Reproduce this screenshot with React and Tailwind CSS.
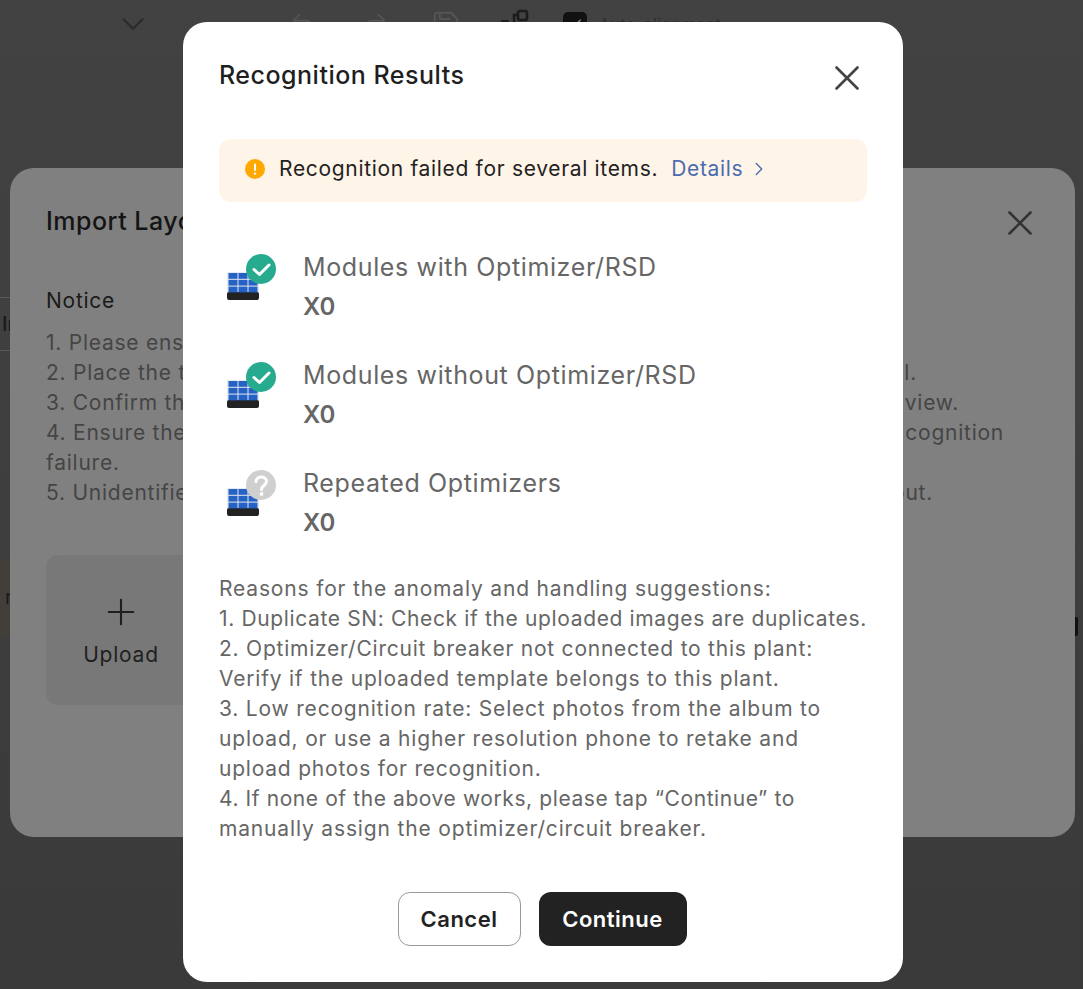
import { X, ChevronDown, ChevronRight, Plus, Undo2, Redo2, Save, Check } from "lucide-react";

const font = { fontFamily: "Inter, 'Open Sans', sans-serif" };

const results = [
  { label: "Modules with Optimizer/RSD", status: "ok" },
  { label: "Modules without Optimizer/RSD", status: "ok" },
  { label: "Repeated Optimizers", status: "unknown" },
];

const reasons = [
  { text: "Reasons for the anomaly and handling suggestions:", spacing: "tracking-[0.83px]" },
  { text: "1. Duplicate SN: Check if the uploaded images are duplicates.", spacing: "tracking-[0.64px]" },
  { text: "2. Optimizer/Circuit breaker not connected to this plant:", spacing: "tracking-[0.77px]" },
  { text: "Verify if the uploaded template belongs to this plant.", spacing: "tracking-[0.79px]" },
  { text: "3. Low recognition rate: Select photos from the album to", spacing: "tracking-[0.8px]" },
  { text: "upload, or use a higher resolution phone to retake and", spacing: "tracking-[0.8px]" },
  { text: "upload photos for recognition.", spacing: "tracking-[0.78px]" },
  { text: "4. If none of the above works, please tap “Continue” to", spacing: "tracking-[0.59px]" },
  { text: "manually assign the optimizer/circuit breaker.", spacing: "tracking-[0.84px]" },
];

function PanelIcon({ status }) {
  return (
    <svg width="60" height="60" viewBox="0 0 60 60" className="shrink-0">
      <rect x="8" y="22" width="32" height="23" fill="#e4e8f0" />
      <rect x="8" y="42" width="32" height="8" rx="2" fill="#222222" />
      {[0, 1, 2].map((row) =>
        [0, 1, 2].map((col) => (
          <rect key={row + "-" + col} x={9.5 + col * 10} y={23 + row * 6.8} width="9" height="5.8" fill="#2463c4" />
        ))
      )}
      {status === "ok" ? (
        <g>
          <circle cx="42" cy="19" r="15" fill="#27ab8e" />
          <path d="M35 19.5 L40.5 24.5 L50 15" fill="none" stroke="#fff" strokeWidth="3" strokeLinecap="round" strokeLinejoin="round" />
        </g>
      ) : (
        <g>
          <circle cx="42" cy="19" r="15" fill="#cfcfcf" />
          <path d="M37 15.5 C37 9.5 47.5 9.5 47.5 15.5 C47.5 19.5 42.5 19.5 42.5 23.5" fill="none" stroke="#fff" strokeWidth="3" strokeLinecap="round" />
          <circle cx="42.5" cy="28" r="1.9" fill="#fff" />
        </g>
      )}
    </svg>
  );
}

function Toolbar() {
  return (
    <div className="flex h-[48px] items-center text-[#2a2a2a]">
      <ChevronDown size={38} strokeWidth={1.3} className="ml-[114px]" />
      <Undo2 size={28} strokeWidth={1.5} className="ml-[137px] text-[#555555]" />
      <Redo2 size={28} strokeWidth={1.5} className="ml-[44px] text-[#555555]" />
      <Save size={30} strokeWidth={1.5} className="ml-[42px] text-[#555555]" />
      <svg width="28" height="30" viewBox="0 0 28 30" className="ml-[40px] shrink-0">
        <rect x="17" y="2" width="9" height="9" rx="2" fill="none" stroke="#1c1c1c" strokeWidth="2.6" />
        <rect x="17" y="17" width="9" height="9" rx="2" fill="none" stroke="#1c1c1c" strokeWidth="2.6" />
        <rect x="0" y="11" width="8" height="9" rx="1.5" fill="#1c1c1c" />
        <path d="M8 15 H13 V6 H17 M13 15 V21 H17" fill="none" stroke="#1c1c1c" strokeWidth="2.4" />
      </svg>
      <div className="ml-[34px] flex h-[24px] w-[24px] items-center justify-center rounded-[5px] bg-[#111111]">
        <Check size={16} className="text-[#888888]" />
      </div>
      <span className="ml-[12px] text-[16px] tracking-[0.4px] text-[#2e2e2e]">Auto-alignment</span>
    </div>
  );
}

function NoticeLine({ left, right, rightPad }) {
  return (
    <div className="flex justify-between whitespace-nowrap">
      <span>{left}</span>
      {right && <span className={rightPad}>{right}</span>}
    </div>
  );
}

function ImportSheet() {
  return (
    <div className="absolute left-[10px] top-[168px] h-[669px] w-[1065px] rounded-[24px] bg-[#808080] px-[36px] pt-[36px]">
      <div className="flex h-[36px] items-center justify-between">
        <h2 className="text-[25px] font-medium tracking-[0.5px] text-[#141414]">Import Layout</h2>
        <X size={42} strokeWidth={1.5} className="mr-[-2px] mt-[2px] text-[#333333]" />
      </div>
      <p className="mt-[45px] text-[21px] tracking-[0.75px] text-[#1a1a1a]">Notice</p>
      <div className="mt-[11px] text-[21px] leading-[30px] tracking-[0.75px] text-[#454545]">
        <NoticeLine left="1. Please ensure" />
        <NoticeLine left="2. Place the t" right="el." rightPad="pr-[122px]" />
        <NoticeLine left="3. Confirm th" right="view." rightPad="pr-[80px]" />
        <NoticeLine left="4. Ensure the" right="cognition" rightPad="pr-[35px]" />
        <NoticeLine left="failure." />
        <NoticeLine left="5. Unidentifie" right="out." rightPad="pr-[106px]" />
      </div>
      <div className="mt-[47px] flex h-[150px] w-[150px] flex-col items-center justify-center rounded-[12px] bg-[#787878] pt-[2px] text-[#1f1f1f]">
        <Plus size={42} strokeWidth={1.2} />
        <span className="mt-[6px] text-[21px] tracking-[0.75px]">Upload</span>
      </div>
    </div>
  );
}

function ResultsModal() {
  return (
    <div className="absolute left-[183px] top-[22px] h-[960px] w-[720px] rounded-[24px] bg-white px-[36px] pt-[36px]">
      <div className="flex h-[36px] items-center justify-between">
        <h2 className="text-[25px] font-medium tracking-[0.5px] text-[#1f1f1f]">Recognition Results</h2>
        <X size={42} strokeWidth={1.5} className="mr-[-1px] mt-[4px] text-[#444444]" />
      </div>
      <div className="mt-[45px] flex h-[63px] items-center rounded-[12px] bg-[#fff4e8] pb-[3px] pl-[26px] text-[21px] tracking-[0.68px] text-[#222222]">
        <svg width="20" height="20" viewBox="0 0 20 20" className="shrink-0">
          <circle cx="10" cy="10" r="10" fill="#ffa800" />
          <rect x="9" y="4.5" width="2" height="7.5" rx="1" fill="#fff" />
          <circle cx="10" cy="14.6" r="1.2" fill="#fff" />
        </svg>
        <span className="ml-[14px]">Recognition failed for several items.</span>
        <span className="ml-[13px] text-[#4a6cb0]">Details</span>
        <ChevronRight size={22} strokeWidth={1.5} className="ml-[5px] text-[#4a6cb0]" />
      </div>
      <div className="mt-[38px] flex flex-col gap-[28px]">
        {results.map((item) => (
          <div key={item.label} className="flex h-[80px] items-center">
            <PanelIcon status={item.status} />
            <div className="ml-[24px] self-start pt-[9px] text-[#666666]">
              <p className="text-[25px] leading-[36px] tracking-[0.63px]">{item.label}</p>
              <p className="mt-[4px] text-[24px] font-semibold leading-[36px]">X0</p>
            </div>
          </div>
        ))}
      </div>
      <div className="mt-[38px] text-[21px] leading-[30px] text-[#666666]">
        {reasons.map((line) => (
          <p key={line.text} className={"whitespace-nowrap " + line.spacing}>{line.text}</p>
        ))}
      </div>
      <div className="mt-[48px] flex justify-center gap-[18px] pr-[2px] text-[22px] font-semibold tracking-[0.5px]">
        <button className="h-[54px] w-[123px] rounded-[12px] border border-[#999999] text-[#222222]">Cancel</button>
        <button className="h-[54px] w-[148px] rounded-[12px] bg-[#222222] text-white">Continue</button>
      </div>
    </div>
  );
}

export default function App() {
  return (
    <div style={font} className="relative h-[989px] w-[1083px] overflow-hidden bg-gradient-to-b from-[#424242] to-[#3a3a3a]">
      <Toolbar />
      <div className="absolute left-0 top-[297px] h-[54px] w-[20px] border-y border-[#5a5a5a] pl-[2px] text-[20px] font-medium leading-[52px] text-[#1a1a1a]">In</div>
      <div className="absolute left-0 top-[560px] h-[77px] w-[20px] bg-[#423f3b] pl-[5px] text-[20px] leading-[74px] text-[#1a1a1a]">r</div>
      <div className="absolute left-[1075px] top-[617px] h-[19px] w-[3px] rounded-r-[2px] bg-[#111111]" />
      <ImportSheet />
      <ResultsModal />
    </div>
  );
}
